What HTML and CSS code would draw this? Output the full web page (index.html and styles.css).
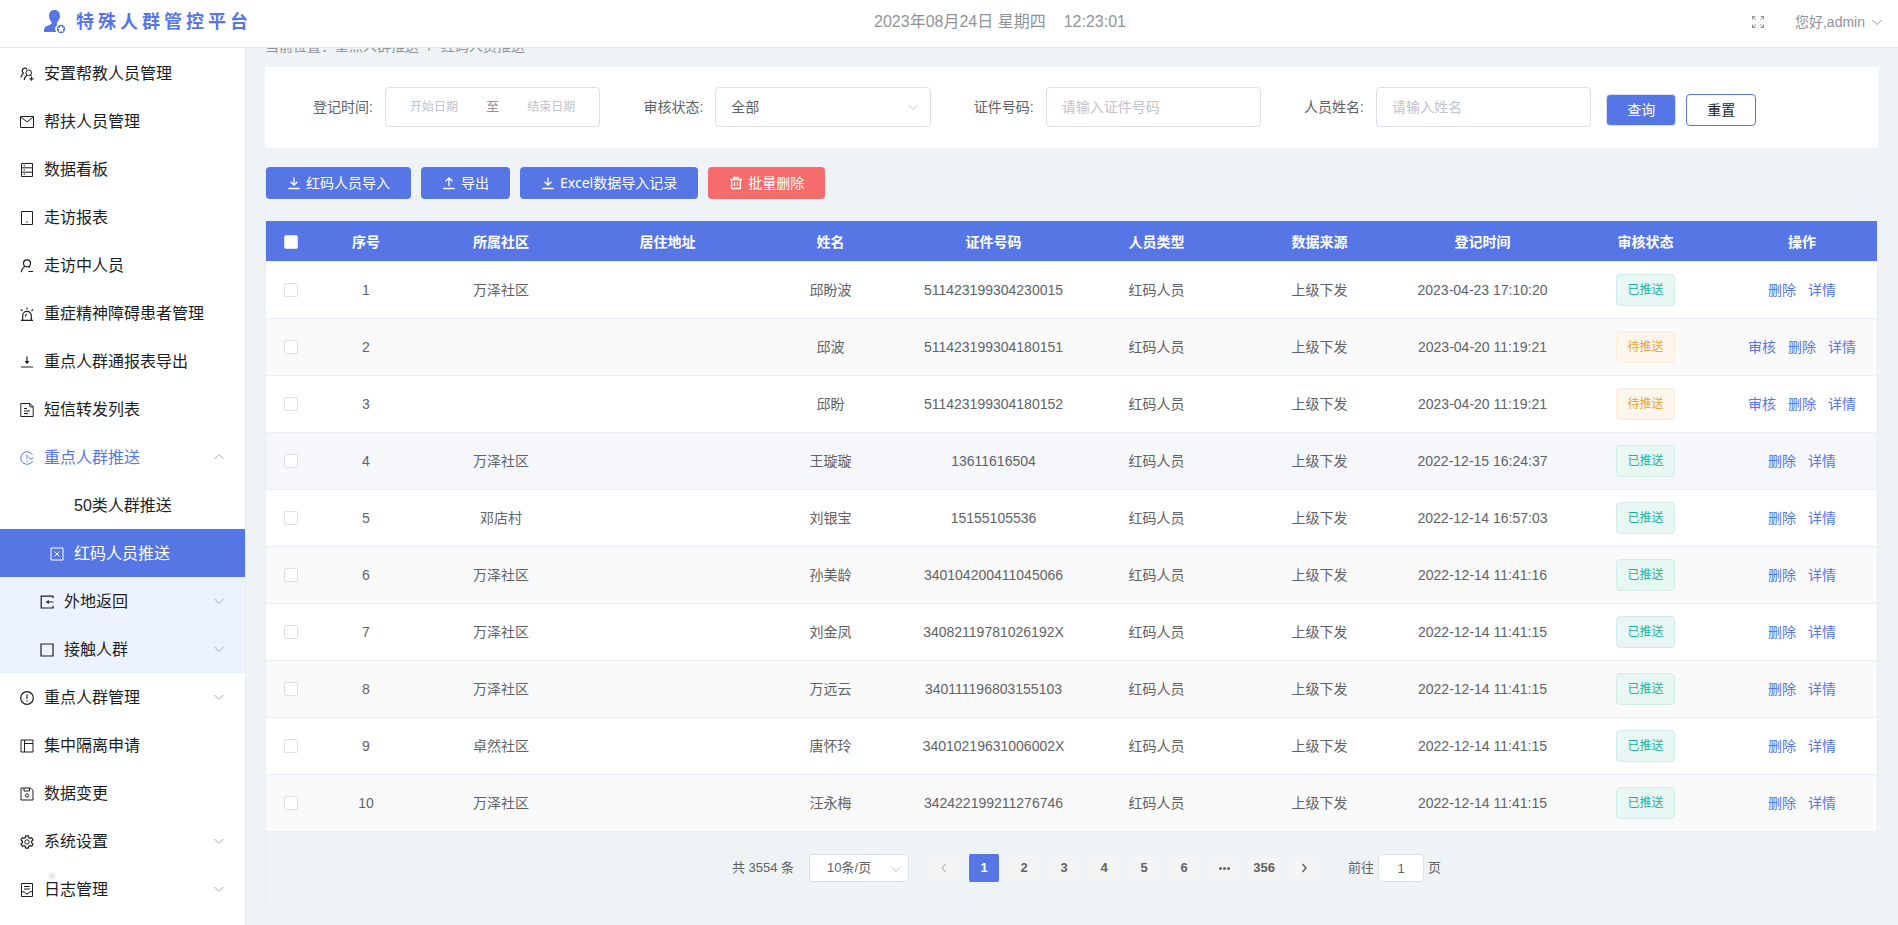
FILE: index.html
```html
<!DOCTYPE html>
<html lang="zh-CN">
<head>
<meta charset="utf-8">
<title>特殊人群管控平台</title>
<link rel="stylesheet" href="styles.css">
</head>
<body>
<svg class="sprite" aria-hidden="true">
  <symbol id="i-down" viewBox="0 0 14 14"><path d="M2.500 5l4.500 4.500L11.500 5"/></symbol>
  <symbol id="i-chev" viewBox="0 0 12 12"><path d="M1.500 4L6 8.500 10.500 4"/></symbol>
  <symbol id="i-left" viewBox="0 0 12 12"><path d="M7.500 2L4 6l3.500 4"/></symbol>
  <symbol id="i-right" viewBox="0 0 12 12"><path d="M4.500 2L8 6l-3.500 4"/></symbol>
  <symbol id="i-import" viewBox="0 0 14 14"><path stroke-width="1.300" d="M7 1.500V9M3.500 5.800L7 9.200l3.500-3.400M1.300 12.500h11.400"/></symbol>
  <symbol id="i-export" viewBox="0 0 14 14"><path stroke-width="1.300" d="M7 10V2M3.500 5.200L7 1.800l3.500 3.400M1.300 12.500h11.400"/></symbol>
  <symbol id="i-trash" viewBox="0 0 14 14"><path stroke-width="1.300" d="M1 3.500h12M5 3.500v-2h4v2M2.600 3.500v9h8.800v-9M5.500 6v4M8.500 6v4"/></symbol>
  <symbol id="i-full" viewBox="0 0 14 14"><path d="M1.500 4.500v-3h3M1.500 1.500l3.300 3.300M9.500 1.500h3v3M12.500 1.500L9.200 4.800M1.500 9.500v3h3M1.500 12.500l3.300-3.300M9.500 12.500h3v-3M12.500 12.500L9.200 9.200"/></symbol>
  <symbol id="i-users" viewBox="0 0 14 14"><circle cx="8.700" cy="5.800" r="2.800"/><path stroke-width="1.200" d="M4.300 13c0-2.300 1-3.700 2.700-4.700M7 2.200A2.700 2.700 0 0 0 2.200 3.800c0 1 .4 1.800 1.200 2.400C1.900 7.200 1.200 8.600 1 10.500M10.500 8.200l1 .9M11.500 9.800v4M9.500 11.800h4"/></symbol>
  <symbol id="i-mail" viewBox="0 0 14 14"><path d="M.5 1.500h13v11H.5z"/><path d="M1 2.300L7 6.800l6-4.500"/></symbol>
  <symbol id="i-server" viewBox="0 0 14 14"><path d="M1.500.5h11v13h-11zM1.500 4.800h11M1.500 9.200h11M3.500 2.700h1.500M3.500 7H5M3.500 11.300H5"/></symbol>
  <symbol id="i-tablet" viewBox="0 0 14 14"><path d="M1.500.5h11v13h-11zM6.200 11h1.600"/></symbol>
  <symbol id="i-user" viewBox="0 0 14 14"><g stroke-width="1.200"><circle cx="7" cy="4.300" r="3.500"/><path d="M1.300 13.300c.2-2.700 1.600-4.800 3.800-5.800M8.600 7.500l1.600 1M8.500 12.500h4.500"/></g></symbol>
  <symbol id="i-alarm" viewBox="0 0 14 14"><path stroke-width="1.200" d="M1 13.300h12M2.700 13V8.700a4.300 4.300 0 0 1 8.600 0V13M5.200 9.500c0-1.200.6-1.900 1.600-2.100M7 2.500v-2M2.500 4L.9 2.400M11.500 4l1.600-1.600"/></symbol>
  <symbol id="i-dl" viewBox="0 0 14 14"><path stroke-width="1.200" d="M7 1.500v6M5.700 6.500L7 8.300l1.300-1.800zM1 12h12"/></symbol>
  <symbol id="i-doc" viewBox="0 0 14 14"><path d="M.8.500h9.200l3.200 3.200v9.800H.8zM9.800.5v3.300h3.300M4 5.500h3M4 8h6M4 10.500h4"/></symbol>
  <symbol id="i-refresh" viewBox="0 0 14 14"><path d="M12.600 10A6.300 6.300 0 1 1 12.500 3.800M9 5.800l2 2.500 2.600-1.800M7 3.500v4.300M7 9.500v1.300"/></symbol>
  <symbol id="i-xbox" viewBox="0 0 14 14"><path d="M1 1h12v12H1zM4.500 4.500l5 5M9.500 4.500l-5 5"/></symbol>
  <symbol id="i-enter" viewBox="0 0 14 14"><path stroke-width="1.200" d="M13 3.300V1.200H1.200v11.800H13v-2.200M13.500 7H7"/><path class="solid" d="M5.800 7l3-2v4z"/></symbol>
  <symbol id="i-box" viewBox="0 0 14 14"><path stroke-width="1.200" d="M1 1h12v12H1z"/></symbol>
  <symbol id="i-warn" viewBox="0 0 14 14"><g stroke-width="1.200"><circle cx="7" cy="7" r="6.300"/><path d="M7 3.500v4.300M7 9.200v1.400"/></g></symbol>
  <symbol id="i-grid" viewBox="0 0 14 14"><path d="M1 1h12v12H1zM4.500 1v12M4.500 4.500H13"/></symbol>
  <symbol id="i-save" viewBox="0 0 14 14"><path d="M1 1h9.500L13 3.300V13H1zM4 1v3h5.500V1"/><circle cx="7" cy="8.500" r="1.600"/></symbol>
  <symbol id="i-gear" viewBox="0 0 14 14"><circle cx="7" cy="7" r="2.200"/><path stroke-width="1.200" d="M5.700.8h2.600l.4 1.800 1.200.7 1.800-.6L13 5l-1.400 1.300v1.400L13 9l-1.300 2.300-1.800-.6-1.200.7-.4 1.800H5.700l-.4-1.800-1.200-.7-1.800.6L1 9l1.400-1.300V6.300L1 5l1.300-2.300 1.800.6 1.200-.7z"/></symbol>
  <symbol id="i-log" viewBox="0 0 14 14"><path d="M1.500.5h11v13h-11zM4 3.500h6M4 6h6M1.500 8.800h2.800L6 10.800h2l1.700-2h2.800"/></symbol>
</svg>

<header class="header">
  <div class="brand">
    <svg class="brand-logo" viewBox="0 0 22 24" aria-hidden="true">
      <path class="solid" d="M10.500 0C7 0 4.900 2.600 5 6c.1 2.600 1.200 4.500 2.500 6 .5 1.500-.2 2.200-1.500 2.800L2 16.500C.4 17.400 0 18.600 0 22h12.200a5.600 5.600 0 0 1 1.200-7.400c-.4-.8-.5-1.500-.1-2.500C14.800 10.500 16 8.600 16 6c.1-3.400-2-6-5.500-6z"/>
      <circle class="ring" cx="17" cy="19" r="4.200"/>
      <path class="star" d="M17 16.200l.8 1.800 2 .2-1.500 1.400.4 2-1.700-1-1.700 1 .4-2-1.500-1.400 2-.2z"/>
    </svg>
    <h1 class="brand-name">特殊人群管控平台</h1>
  </div>
  <div class="clock"><span>2023年08月24日 星期四</span><time>12:23:01</time></div>
  <div class="account">
    <button class="icon-btn" aria-label="全屏"><svg class="icon"><use href="#i-full"/></svg></button>
    <button class="user-btn">您好,admin<svg class="chev"><use href="#i-chev"/></svg></button>
  </div>
</header>

<div class="body">
  <nav class="sidebar">
    <a class="item" href="#"><svg class="icon"><use href="#i-users"/></svg>安置帮教人员管理</a>
    <a class="item" href="#"><svg class="icon"><use href="#i-mail"/></svg>帮扶人员管理</a>
    <a class="item" href="#"><svg class="icon"><use href="#i-server"/></svg>数据看板</a>
    <a class="item" href="#"><svg class="icon"><use href="#i-tablet"/></svg>走访报表</a>
    <a class="item" href="#"><svg class="icon"><use href="#i-user"/></svg>走访中人员</a>
    <a class="item" href="#"><svg class="icon"><use href="#i-alarm"/></svg>重症精神障碍患者管理</a>
    <a class="item" href="#"><svg class="icon"><use href="#i-dl"/></svg>重点人群通报表导出</a>
    <a class="item" href="#"><svg class="icon"><use href="#i-doc"/></svg>短信转发列表</a>
    <button class="item open"><svg class="icon"><use href="#i-refresh"/></svg>重点人群推送<svg class="chev up"><use href="#i-chev"/></svg></button>
    <a class="item plain" href="#">50类人群推送</a>
    <a class="item deep active" href="#"><svg class="icon"><use href="#i-xbox"/></svg>红码人员推送</a>
    <button class="item sub"><svg class="icon"><use href="#i-enter"/></svg>外地返回<svg class="chev"><use href="#i-chev"/></svg></button>
    <button class="item sub"><svg class="icon"><use href="#i-box"/></svg>接触人群<svg class="chev"><use href="#i-chev"/></svg></button>
    <button class="item"><svg class="icon"><use href="#i-warn"/></svg>重点人群管理<svg class="chev"><use href="#i-chev"/></svg></button>
    <a class="item" href="#"><svg class="icon"><use href="#i-grid"/></svg>集中隔离申请</a>
    <a class="item" href="#"><svg class="icon"><use href="#i-save"/></svg>数据变更</a>
    <button class="item"><svg class="icon"><use href="#i-gear"/></svg>系统设置<svg class="chev"><use href="#i-chev"/></svg></button>
    <button class="item spark"><svg class="icon"><use href="#i-log"/></svg>日志管理<svg class="chev"><use href="#i-chev"/></svg></button>
  </nav>

  <main class="main">
    <div class="crumbs"><span>当前位置：</span><span>重点人群推送</span><i>/</i><span>红码人员推送</span></div>

    <form class="filters">
      <div class="field">
        <label for="start">登记时间:</label>
        <div class="range"><input id="start" type="text" placeholder="开始日期"><span>至</span><input type="text" placeholder="结束日期" aria-label="结束日期"></div>
      </div>
      <div class="field">
        <label for="state">审核状态:</label>
        <div class="pick"><select id="state"><option>全部</option></select><svg class="icon"><use href="#i-down"/></svg></div>
      </div>
      <div class="field">
        <label for="idno">证件号码:</label>
        <input class="text" id="idno" type="text" placeholder="请输入证件号码">
      </div>
      <div class="field">
        <label for="pname">人员姓名:</label>
        <input class="text" id="pname" type="text" placeholder="请输入姓名">
      </div>
      <div class="submit">
        <button class="btn search" type="button">查询</button>
        <button class="btn reset" type="reset">重置</button>
      </div>
    </form>

    <section class="card">
      <div class="tools">
        <button class="btn primary"><svg class="icon"><use href="#i-import"/></svg>红码人员导入</button>
        <button class="btn primary"><svg class="icon"><use href="#i-export"/></svg>导出</button>
        <button class="btn primary"><svg class="icon"><use href="#i-import"/></svg>Excel数据导入记录</button>
        <button class="btn danger"><svg class="icon"><use href="#i-trash"/></svg>批量删除</button>
      </div>
      <table class="grid">
        <colgroup><col class="c-check"><col class="c-no"><col class="c-area"><col><col><col><col><col><col><col><col class="c-act"></colgroup>
        <thead>
          <tr><th><input type="checkbox" aria-label="全选"></th><th>序号</th><th>所属社区</th><th>居住地址</th><th>姓名</th><th>证件号码</th><th>人员类型</th><th>数据来源</th><th>登记时间</th><th>审核状态</th><th>操作</th></tr>
        </thead>
        <tbody>
          <tr><td><input type="checkbox" aria-label="选择 1"></td><td>1</td><td>万泽社区</td><td></td><td>邱盼波</td><td>511423199304230015</td><td>红码人员</td><td>上级下发</td><td>2023-04-23 17:10:20</td><td><span class="tag done">已推送</span></td><td><div class="acts"><a href="#">删除</a><a href="#">详情</a></div></td></tr>
          <tr><td><input type="checkbox" aria-label="选择 2"></td><td>2</td><td></td><td></td><td>邱波</td><td>511423199304180151</td><td>红码人员</td><td>上级下发</td><td>2023-04-20 11:19:21</td><td><span class="tag wait">待推送</span></td><td><div class="acts"><a href="#">审核</a><a href="#">删除</a><a href="#">详情</a></div></td></tr>
          <tr><td><input type="checkbox" aria-label="选择 3"></td><td>3</td><td></td><td></td><td>邱盼</td><td>511423199304180152</td><td>红码人员</td><td>上级下发</td><td>2023-04-20 11:19:21</td><td><span class="tag wait">待推送</span></td><td><div class="acts"><a href="#">审核</a><a href="#">删除</a><a href="#">详情</a></div></td></tr>
          <tr class="hover"><td><input type="checkbox" aria-label="选择 4"></td><td>4</td><td>万泽社区</td><td></td><td>王璇璇</td><td>13611616504</td><td>红码人员</td><td>上级下发</td><td>2022-12-15 16:24:37</td><td><span class="tag done">已推送</span></td><td><div class="acts"><a href="#">删除</a><a href="#">详情</a></div></td></tr>
          <tr><td><input type="checkbox" aria-label="选择 5"></td><td>5</td><td>邓店村</td><td></td><td>刘银宝</td><td>15155105536</td><td>红码人员</td><td>上级下发</td><td>2022-12-14 16:57:03</td><td><span class="tag done">已推送</span></td><td><div class="acts"><a href="#">删除</a><a href="#">详情</a></div></td></tr>
          <tr><td><input type="checkbox" aria-label="选择 6"></td><td>6</td><td>万泽社区</td><td></td><td>孙美龄</td><td>340104200411045066</td><td>红码人员</td><td>上级下发</td><td>2022-12-14 11:41:16</td><td><span class="tag done">已推送</span></td><td><div class="acts"><a href="#">删除</a><a href="#">详情</a></div></td></tr>
          <tr><td><input type="checkbox" aria-label="选择 7"></td><td>7</td><td>万泽社区</td><td></td><td>刘金凤</td><td>34082119781026192X</td><td>红码人员</td><td>上级下发</td><td>2022-12-14 11:41:15</td><td><span class="tag done">已推送</span></td><td><div class="acts"><a href="#">删除</a><a href="#">详情</a></div></td></tr>
          <tr><td><input type="checkbox" aria-label="选择 8"></td><td>8</td><td>万泽社区</td><td></td><td>万远云</td><td>340111196803155103</td><td>红码人员</td><td>上级下发</td><td>2022-12-14 11:41:15</td><td><span class="tag done">已推送</span></td><td><div class="acts"><a href="#">删除</a><a href="#">详情</a></div></td></tr>
          <tr><td><input type="checkbox" aria-label="选择 9"></td><td>9</td><td>卓然社区</td><td></td><td>唐怀玲</td><td>34010219631006002X</td><td>红码人员</td><td>上级下发</td><td>2022-12-14 11:41:15</td><td><span class="tag done">已推送</span></td><td><div class="acts"><a href="#">删除</a><a href="#">详情</a></div></td></tr>
          <tr><td><input type="checkbox" aria-label="选择 10"></td><td>10</td><td>万泽社区</td><td></td><td>汪永梅</td><td>342422199211276746</td><td>红码人员</td><td>上级下发</td><td>2022-12-14 11:41:15</td><td><span class="tag done">已推送</span></td><td><div class="acts"><a href="#">删除</a><a href="#">详情</a></div></td></tr>
        </tbody>
      </table>
      <div class="pager">
        <span class="total">共 3554 条</span>
        <div class="pick small"><select aria-label="每页条数"><option>10条/页</option></select><svg class="chev"><use href="#i-chev"/></svg></div>
        <div class="pages">
          <button disabled aria-label="上一页"><svg class="chev"><use href="#i-left"/></svg></button>
          <button class="current">1</button>
          <button>2</button>
          <button>3</button>
          <button>4</button>
          <button>5</button>
          <button>6</button>
          <button aria-label="更多" class="more"><b></b><b></b><b></b></button>
          <button>356</button>
          <button aria-label="下一页"><svg class="chev"><use href="#i-right"/></svg></button>
        </div>
        <label class="jump">前往<input type="text" value="1">页</label>
      </div>
    </section>
  </main>
</div>
</body>
</html>
```
FILE: styles.css
```css
* { box-sizing: border-box; }

body {
  margin: 0;
  height: 100vh;
  display: flex;
  flex-direction: column;
  overflow: hidden;
  background: #eff3f5;
  color: #606266;
  font: 14px/20px "Liberation Sans", "Noto Sans CJK SC", sans-serif;
}

button, input, select { font: inherit; color: inherit; }
button { border: 0; background: none; padding: 0; cursor: pointer; }
a { color: inherit; text-decoration: none; }

.sprite { display: none; }
svg { fill: none; stroke: currentColor; flex: none; }
.icon { width: 14px; height: 14px; }
.chev { width: 12px; height: 12px; }

/* header */
.header {
  flex: none;
  height: 48px;
  display: grid;
  grid-template-columns: 1fr auto 1fr;
  align-items: center;
  padding: 0 15px 4px 44px;
  background: #fff;
  border-bottom: 1px solid #e6e6e6;
  color: #909399;
}
.brand { display: flex; align-items: center; gap: 10px; }
.brand-logo { width: 22px; height: 24px; color: #5676e5; }
.solid { fill: currentColor; stroke: none; }
.ring { fill: currentColor; stroke: none; }
.star { fill: #fff; stroke: #fff; }
.brand-name {
  margin: 0;
  color: #5676e5;
  font: bold 18px/24px "Liberation Serif", "Noto Sans CJK SC", serif;
  letter-spacing: 4px;
}
.clock { display: flex; gap: 18px; font-size: 16px; padding-left: 73px; }
.account { display: flex; justify-content: flex-end; align-items: center; gap: 30px; }
.icon-btn, .user-btn { display: flex; align-items: center; gap: 6px; }

/* sidebar */
.body { flex: 1; display: flex; min-height: 0; }
.sidebar {
  flex: none;
  width: 246px;
  padding-top: 1px;
  overflow: hidden;
  background: #fff;
  border-right: 1px solid #e6eaed;
}
.item {
  position: relative;
  display: flex;
  align-items: center;
  gap: 10px;
  width: 100%;
  height: 48px;
  padding: 2px 20px 0;
  color: #1b1e24;
  font-size: 16px;
  text-align: left;
}
.item .chev { margin: 0 0 2px auto; color: #a3a7ae; }
.item .up { transform: rotate(180deg); }
.open { color: #5676e5; }
.plain { padding-left: 74px; }
.deep { padding-left: 50px; }
.active { background: #5676e5; color: #fff; }
.sub { padding-left: 40px; background: #edf2ff; }
.spark::before {
  content: "";
  position: absolute;
  left: 47px;
  top: 6px;
  width: 10px;
  height: 10px;
  background: radial-gradient(circle, #dcdfe2, transparent 70%);
}

/* content */
.main { flex: 1; min-width: 0; overflow: hidden; padding: 0 20px 0 19px; }
.crumbs { display: flex; margin: -12px 0 11px; color: #909399; }
.crumbs i { margin: 0 9px; font-style: normal; }

.filters { display: flex; padding: 20px 20px 21px; background: #fff; }
.field { display: flex; align-items: center; width: 21%; padding-right: 15px; }
.field label { flex: none; width: 100px; padding-right: 12px; text-align: right; }
.text, .range, .pick { flex: 1; min-width: 0; height: 40px; border: 1px solid #dcdfe6; border-radius: 4px; background: #fff; }
.text { padding: 0 15px; }
::placeholder { color: #bfc3cc; opacity: 1; }
.range { display: flex; align-items: center; padding: 0 6px; color: #909399; }
.range input { flex: 1; min-width: 0; border: 0; padding: 0; background: none; text-align: center; font-size: 12px; outline: 0; }
.range span { padding: 0 10px; font-size: 13px; }
.pick { position: relative; }
.pick select { width: 100%; height: 100%; padding: 0 30px 0 15px; border: 0; background: none; appearance: none; }
.pick svg { position: absolute; right: 10px; top: 50%; margin-top: -7px; color: #c0c4cc; pointer-events: none; }

.btn { display: flex; align-items: center; justify-content: center; gap: 5px; height: 32px; padding: 0 21px; border-radius: 4px; white-space: nowrap; }
.submit { display: flex; align-items: flex-end; gap: 10px; padding-bottom: 1px; }
.search, .reset { width: 70px; padding: 0; border: 1px solid #dcdfe6; }
.search { background: #5676e5; color: #fff; }
.reset { border-color: #5676e5; color: #1b1e24; }

.card { margin-top: 10px; border: 1px solid #e9edf5; border-radius: 4px; }
.tools { display: flex; gap: 10px; padding: 8px 0 22px; font-family: "Noto Sans", "Noto Sans CJK SC", sans-serif; }
.primary { background: #5676e5; color: #fff; }
.danger { background: #f56c6c; color: #fff; }

/* table */
.grid { width: 100%; table-layout: fixed; border-collapse: separate; border-spacing: 0; text-align: center; background: #fff; }
.c-check { width: 50px; }
.c-no { width: 100px; }
.c-area { width: 170px; }
.c-act { width: 150px; }
.grid th, .grid td { padding: 0; border-bottom: 1px solid #ebeef5; }
.grid th { height: 41px; padding-top: 1px; background: #5676e5; color: #fff; }
.grid td { height: 57px; }
.grid tbody tr:nth-child(even) { background: #fafafa; }
.grid tbody tr.hover:nth-child(even) { background: #f5f7fa; }
.grid input {
  display: block;
  width: 14px;
  height: 14px;
  margin: 0 auto;
  appearance: none;
  border: 1px solid #dcdfe6;
  border-radius: 2px;
  background: #fff;
}
.tag { display: inline-block; height: 32px; padding: 0 10px; border: 1px solid; border-radius: 4px; font-size: 12px; line-height: 30px; vertical-align: middle; }
.done { color: #1ab3a0; background: #e8f6f4; border-color: #d1edea; }
.wait { color: #e6a23c; background: #fdf6ec; border-color: #faecd8; }
.acts { display: flex; justify-content: center; gap: 12px; color: #5676e5; }

/* pagination */
.pager { display: flex; justify-content: center; align-items: center; padding: 22px 0 24px 30px; font-size: 13px; }
.small { flex: none; width: 100px; height: 28px; margin: 0 20px 0 15px; border-radius: 3px; }
.small select { padding: 0 24px 0 17px; }
.small .chev { right: 6px; margin-top: -5px; }
.pages { display: flex; gap: 10px; }
.pages button { display: flex; align-items: center; justify-content: center; gap: 1px; width: 30px; height: 28px; border-radius: 2px; background: #f4f4f5; font-weight: bold; }
.pages .current { background: #5676e5; color: #fff; }
.pages button:disabled { color: #c0c4cc; }
.more b { width: 3px; height: 3px; border-radius: 50%; background: #606266; }
.pages .chev { stroke-width: 1.500; }
.jump { display: flex; align-items: center; gap: 4px; margin-left: 29px; }
.jump input { width: 46px; height: 28px; padding: 0; border: 1px solid #dcdfe6; border-radius: 4px; background: #fff; text-align: center; }
```
